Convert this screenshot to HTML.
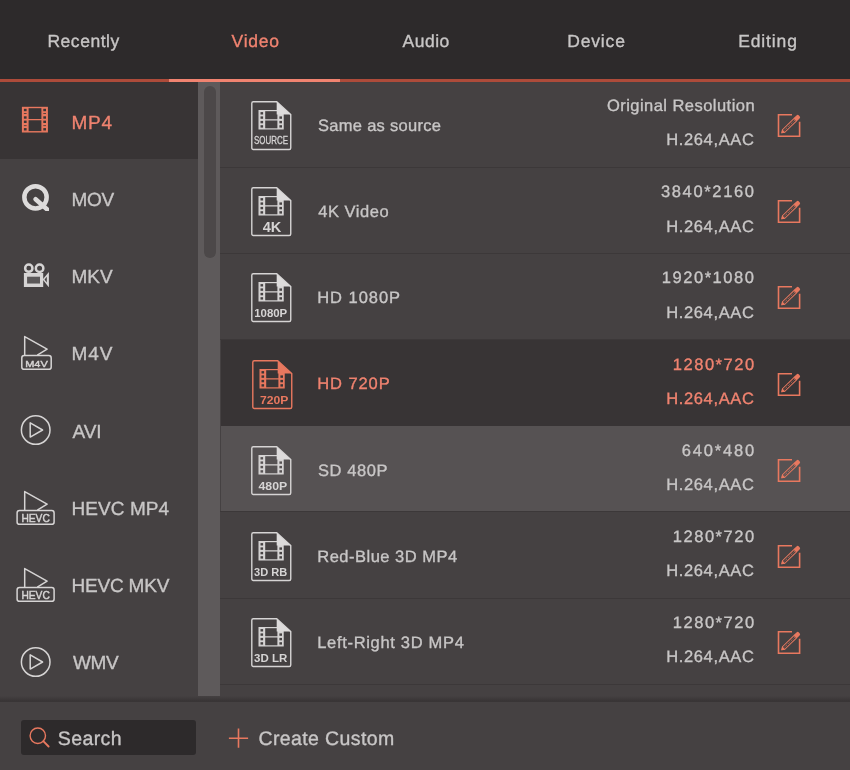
<!DOCTYPE html>
<html lang="en"><head><meta charset="utf-8"><title>Format</title>
<style>
*{margin:0;padding:0;box-sizing:border-box}
html,body{width:850px;height:770px;overflow:hidden;background:#454142}
body{position:relative;font-family:"Liberation Sans",sans-serif;color:#c8c6c6;-webkit-font-smoothing:antialiased}
.abs{position:absolute}
.tx{position:absolute;white-space:nowrap;color:#c8c6c6;-webkit-text-stroke:0.35px currentColor;text-rendering:geometricPrecision}
#L{position:absolute;left:0;top:0;width:850px;height:770px;will-change:transform}
.tx.on{color:#f08370}
#hdr{position:absolute;left:0;top:0;width:850px;height:79px;background:#2d2a2b}
#line{position:absolute;left:0;top:78.7px;width:850px;height:3.3px;background:#ad4b3a}
#lineact{position:absolute;left:169px;top:78.7px;width:171px;height:3.3px;background:#f08370}
#side{position:absolute;left:0;top:82px;width:198px;height:615px;background:#454142;overflow:hidden}
#sel{position:absolute;left:0;top:82px;width:198px;height:77px;background:#383435}
#track{position:absolute;left:197.5px;top:82px;width:22.5px;height:614px;background:#5e5a5b}
#thumb{position:absolute;left:203.5px;top:86px;width:12px;height:172px;border-radius:6px;background:#4c4849}
.sep{position:absolute;left:220px;width:630px;height:1px;background:#3c3839}
.rbg{position:absolute;left:221px;width:629px}
#foot{position:absolute;left:0;top:696px;width:850px;height:74px;background:#454142}
#footsh{position:absolute;left:0;top:695.5px;width:850px;height:6.3px;background:linear-gradient(to bottom,#454142 0%,#3f3b3c 40%,#383435 85%,#3a3637 100%)}
#search{position:absolute;left:21px;top:720px;width:175px;height:35px;border-radius:3px;background:#2d2a2b}
svg{display:block;overflow:visible}
</style></head><body>

<div id="L">
<div id="hdr"></div><div id="line"></div><div id="lineact"></div>
<div class="tx " style="left:47.45px;top:30px;font-size:17.5px;line-height:23px;height:23px;letter-spacing:0.529px">Recently</div>
<div class="tx on" style="left:231.55px;top:30px;font-size:17.5px;line-height:23px;height:23px;letter-spacing:0.737px">Video</div>
<div class="tx " style="left:402.45px;top:30px;font-size:17.5px;line-height:23px;height:23px;letter-spacing:0.525px">Audio</div>
<div class="tx " style="left:567.25px;top:30px;font-size:17.5px;line-height:23px;height:23px;letter-spacing:0.83px">Device</div>
<div class="tx " style="left:738.15px;top:30px;font-size:17.5px;line-height:23px;height:23px;letter-spacing:0.875px">Editing</div>
<div id="side"></div><div id="sel"></div>
<div class="tx on" style="left:71.55px;top:111px;font-size:19px;line-height:25px;height:25px;letter-spacing:0.7px">MP4</div>
<div class="tx " style="left:71.55px;top:188px;font-size:19px;line-height:25px;height:25px;letter-spacing:-0.325px">MOV</div>
<div class="tx " style="left:71.55px;top:265px;font-size:19px;line-height:25px;height:25px;letter-spacing:-0.05px">MKV</div>
<div class="tx " style="left:71.55px;top:342px;font-size:19px;line-height:25px;height:25px;letter-spacing:0.95px">M4V</div>
<div class="tx " style="left:72.55px;top:420px;font-size:19px;line-height:25px;height:25px;letter-spacing:-0.15px">AVI</div>
<div class="tx " style="left:71.55px;top:497px;font-size:19px;line-height:25px;height:25px;letter-spacing:0.057px">HEVC MP4</div>
<div class="tx " style="left:71.55px;top:574px;font-size:19px;line-height:25px;height:25px;letter-spacing:-0.207px">HEVC MKV</div>
<div class="tx " style="left:72.95px;top:651px;font-size:19px;line-height:25px;height:25px;letter-spacing:-0.375px">WMV</div>
<svg class="abs" style="left:20px;top:105px" width="30" height="30" viewBox="0 0 30 30"><g fill="none" stroke="#e8785f" stroke-width="1.4"><rect x="2.6" y="2.5" width="24.6" height="24.3"/>
<path d="M7.9 2.5V26.8M22.1 2.5V26.8M7.9 14.6H22.1"/></g>
<g fill="#e8785f"><rect x="2.6" y="2.5" width="5.3" height="24.3"/><rect x="22.1" y="2.5" width="5.1" height="24.3"/></g>
<g fill="#383435"><rect x="3.9" y="3.8" width="2.7" height="2.4"/><rect x="3.9" y="8.2" width="2.7" height="0.8"/><rect x="3.9" y="11.3" width="2.7" height="2.4"/><rect x="3.9" y="15.6" width="2.7" height="2.4"/><rect x="3.9" y="20.3" width="2.7" height="0.8"/><rect x="3.9" y="23.1" width="2.7" height="2.4"/><rect x="23.3" y="3.8" width="2.7" height="2.4"/><rect x="23.3" y="8.2" width="2.7" height="0.8"/><rect x="23.3" y="11.3" width="2.7" height="2.4"/><rect x="23.3" y="15.6" width="2.7" height="2.4"/><rect x="23.3" y="20.3" width="2.7" height="0.8"/><rect x="23.3" y="23.1" width="2.7" height="2.4"/></g></svg>
<svg class="abs" style="left:20px;top:182px" width="32" height="32" viewBox="0 0 32 32"><defs><clipPath id="qc"><rect x="0" y="0" width="28.9" height="28.9"/></clipPath></defs>
<circle cx="15.5" cy="15.3" r="11.15" fill="none" stroke="#dddbdb" stroke-width="4.5"/>
<g clip-path="url(#qc)"><path d="M15.6 17.2L32 31.8" stroke="#dddbdb" stroke-width="4.5" stroke-linecap="round"/></g></svg>
<svg class="abs" style="left:20px;top:260px" width="32" height="30" viewBox="0 0 32 30"><g fill="none" stroke="#d6d4d4">
<circle cx="8.8" cy="8.2" r="3.65" stroke-width="2.5"/><circle cx="19.6" cy="8.2" r="3.75" stroke-width="2.5"/>
</g><path d="M3.9 12.9H23.2V27.1H3.9Z M7.1 16.8V23.6H20V16.8Z" fill="#d6d4d4" fill-rule="evenodd"/>
<path d="M22.6 19.6L28.9 11.9V27.1H28.6Z M24.5 19.6L26.8 22.6V16.8Z" fill="#d6d4d4" fill-rule="evenodd"/>
<rect x="7.1" y="16.8" width="12.9" height="6.8" fill="#d6d4d4" opacity="0.16"/></svg>
<svg class="abs" style="left:14px;top:333px" width="44" height="42" viewBox="0 0 44 42"><path d="M10.7 22.2V3.6L33.1 16.2L23.3 22.2" fill="none" stroke="#d6d4d4" stroke-width="1.5" stroke-linejoin="round"/>
<rect x="7.8" y="22.6" width="29.400000000000002" height="13.7" rx="2.4" fill="none" stroke="#d6d4d4" stroke-width="1.5"/>
<text x="22.5" y="33.7" text-anchor="middle" textLength="22.6" lengthAdjust="spacingAndGlyphs" font-family="'Liberation Sans', sans-serif" font-size="9.8" fill="#d6d4d4" stroke="#d6d4d4" stroke-width="0.45">M4V</text></svg>
<svg class="abs" style="left:14px;top:487.5px" width="44" height="42" viewBox="0 0 44 42"><path d="M10.7 22.2V3.6L33.1 16.2L23.3 22.2" fill="none" stroke="#d6d4d4" stroke-width="1.5" stroke-linejoin="round"/>
<rect x="3.1" y="22.6" width="37.0" height="13.7" rx="2.4" fill="none" stroke="#d6d4d4" stroke-width="1.5"/>
<text x="21.6" y="34.2" text-anchor="middle" textLength="28.4" lengthAdjust="spacingAndGlyphs" font-family="'Liberation Sans', sans-serif" font-size="10.6" fill="#d6d4d4" stroke="#d6d4d4" stroke-width="0.45">HEVC</text></svg>
<svg class="abs" style="left:14px;top:564.77px" width="44" height="42" viewBox="0 0 44 42"><path d="M10.7 22.2V3.6L33.1 16.2L23.3 22.2" fill="none" stroke="#d6d4d4" stroke-width="1.5" stroke-linejoin="round"/>
<rect x="3.1" y="22.6" width="37.0" height="13.7" rx="2.4" fill="none" stroke="#d6d4d4" stroke-width="1.5"/>
<text x="21.6" y="34.2" text-anchor="middle" textLength="28.4" lengthAdjust="spacingAndGlyphs" font-family="'Liberation Sans', sans-serif" font-size="10.6" fill="#d6d4d4" stroke="#d6d4d4" stroke-width="0.45">HEVC</text></svg>
<svg class="abs" style="left:20px;top:413.6px" width="32" height="32" viewBox="0 0 32 32"><circle cx="15.7" cy="16" r="14.3" fill="none" stroke="#d6d4d4" stroke-width="1.5"/>
<path d="M10.2 8.9V23.1L22.6 16Z" fill="none" stroke="#d6d4d4" stroke-width="1.5" stroke-linejoin="round"/></svg>
<svg class="abs" style="left:20px;top:645.8px" width="32" height="32" viewBox="0 0 32 32"><circle cx="15.7" cy="16" r="14.3" fill="none" stroke="#d6d4d4" stroke-width="1.5"/>
<path d="M10.2 8.9V23.1L22.6 16Z" fill="none" stroke="#d6d4d4" stroke-width="1.5" stroke-linejoin="round"/></svg>
<div id="track"></div><div id="thumb"></div>
<div class="sep" style="top:166.9px"></div>
<div class="sep" style="top:252.9px"></div>
<div class="sep" style="top:339px"></div>
<div class="sep" style="top:511.3px"></div>
<div class="sep" style="top:597.6px"></div>
<div class="sep" style="top:683.9px"></div>
<div class="rbg" style="top:339.5px;height:86.6px;background:#383435"></div>
<div class="rbg" style="top:426.1px;height:85.1px;background:#565253"></div>
<svg class="abs" style="left:250px;top:100.0px" width="44" height="52" viewBox="0 0 44 52">
<path d="M3.3 1.75H26.7L40.75 14.6V48a1.5 1.5 0 0 1-1.5 1.5H3.3a1.5 1.5 0 0 1-1.5-1.5V3.25a1.5 1.5 0 0 1 1.5-1.5Z" fill="none" stroke="#d6d4d4" stroke-width="1.4"/>
<g fill="none" stroke="#d6d4d4" stroke-width="1.2">
<rect x="9.1" y="10.6" width="24" height="18.3"/>
<path d="M14.6 10.6V28.9M28 10.6V28.9M14.6 19.9H28"/>
</g>
<rect x="9.1" y="10.6" width="5.5" height="18.3" fill="#d6d4d4"/>
<rect x="28" y="10.6" width="5.1" height="18.3" fill="#d6d4d4"/>
<g fill="#454142">
<rect x="10.5" y="12.1" width="2.6" height="2.4"/><rect x="10.5" y="16.4" width="2.6" height="2.4"/><rect x="10.5" y="20.9" width="2.6" height="2.4"/><rect x="10.5" y="25.2" width="2.6" height="2.4"/>
<rect x="29.4" y="16.4" width="2.6" height="2.4"/><rect x="29.4" y="20.9" width="2.6" height="2.4"/><rect x="29.4" y="25.2" width="2.6" height="2.4"/>
</g>
<path d="M26.7 1.9V14.6H40.7Z" fill="#dddbdb"/>
<text x="21.05" y="44.3" text-anchor="middle" textLength="34" lengthAdjust="spacingAndGlyphs" font-family="'Liberation Sans', sans-serif" font-weight="normal" font-size="10.2" fill="#d6d4d4" stroke="#d6d4d4" stroke-width="0.3">SOURCE</text>
</svg><svg class="abs" style="left:776px;top:112.0px" width="26" height="26" viewBox="0 0 26 26">
<path d="M16 2.8H2.5V24.2H23.6V9.8" fill="none" stroke="#e8785f" stroke-width="1.6"/>
<g transform="translate(5.5 21.1) rotate(-44.3)">
<path d="M0.4 0L3-1.75H19.4V1.75H3Z" fill="none" stroke="#e8785f" stroke-width="1" stroke-linejoin="round"/>
<path d="M19.2-2.2h3.9a1.7 1.7 0 0 1 1.7 1.7v1a1.7 1.7 0 0 1-1.7 1.7h-3.9Z" fill="#e8785f"/>
<path d="M-0.2 0L3.2-2.2V2.2Z" fill="#e8785f"/>
<path d="M4.4 0H19" stroke="#e8785f" stroke-width="0.9" stroke-dasharray="1.1 1.1" opacity="0.9"/>
</g>
</svg>
<div class="tx " style="left:318.0px;top:116px;font-size:16.5px;line-height:21px;height:21px;letter-spacing:0.288px">Same as source</div><div class="tx " style="left:606.9px;top:96px;font-size:16.5px;line-height:21px;height:21px;letter-spacing:0.461px">Original Resolution</div><div class="tx " style="left:666.15px;top:130px;font-size:16.5px;line-height:21px;height:21px;letter-spacing:0.65px">H.264,AAC</div>
<svg class="abs" style="left:250px;top:186.17px" width="44" height="52" viewBox="0 0 44 52">
<path d="M3.3 1.75H26.7L40.75 14.6V48a1.5 1.5 0 0 1-1.5 1.5H3.3a1.5 1.5 0 0 1-1.5-1.5V3.25a1.5 1.5 0 0 1 1.5-1.5Z" fill="none" stroke="#d6d4d4" stroke-width="1.4"/>
<g fill="none" stroke="#d6d4d4" stroke-width="1.2">
<rect x="9.1" y="10.6" width="24" height="18.3"/>
<path d="M14.6 10.6V28.9M28 10.6V28.9M14.6 19.9H28"/>
</g>
<rect x="9.1" y="10.6" width="5.5" height="18.3" fill="#d6d4d4"/>
<rect x="28" y="10.6" width="5.1" height="18.3" fill="#d6d4d4"/>
<g fill="#454142">
<rect x="10.5" y="12.1" width="2.6" height="2.4"/><rect x="10.5" y="16.4" width="2.6" height="2.4"/><rect x="10.5" y="20.9" width="2.6" height="2.4"/><rect x="10.5" y="25.2" width="2.6" height="2.4"/>
<rect x="29.4" y="16.4" width="2.6" height="2.4"/><rect x="29.4" y="20.9" width="2.6" height="2.4"/><rect x="29.4" y="25.2" width="2.6" height="2.4"/>
</g>
<path d="M26.7 1.9V14.6H40.7Z" fill="#dddbdb"/>
<text x="22.05" y="45.8" text-anchor="middle" textLength="18.7" lengthAdjust="spacingAndGlyphs" font-family="'Liberation Sans', sans-serif" font-weight="bold" font-size="15.4" fill="#d6d4d4">4K</text>
</svg><svg class="abs" style="left:776px;top:198.17px" width="26" height="26" viewBox="0 0 26 26">
<path d="M16 2.8H2.5V24.2H23.6V9.8" fill="none" stroke="#e8785f" stroke-width="1.6"/>
<g transform="translate(5.5 21.1) rotate(-44.3)">
<path d="M0.4 0L3-1.75H19.4V1.75H3Z" fill="none" stroke="#e8785f" stroke-width="1" stroke-linejoin="round"/>
<path d="M19.2-2.2h3.9a1.7 1.7 0 0 1 1.7 1.7v1a1.7 1.7 0 0 1-1.7 1.7h-3.9Z" fill="#e8785f"/>
<path d="M-0.2 0L3.2-2.2V2.2Z" fill="#e8785f"/>
<path d="M4.4 0H19" stroke="#e8785f" stroke-width="0.9" stroke-dasharray="1.1 1.1" opacity="0.9"/>
</g>
</svg>
<div class="tx " style="left:318.25px;top:202px;font-size:16.5px;line-height:21px;height:21px;letter-spacing:0.529px">4K Video</div><div class="tx " style="left:660.9px;top:182px;font-size:16.5px;line-height:21px;height:21px;letter-spacing:1.663px">3840*2160</div><div class="tx " style="left:666.15px;top:217px;font-size:16.5px;line-height:21px;height:21px;letter-spacing:0.65px">H.264,AAC</div>
<svg class="abs" style="left:250px;top:272.34px" width="44" height="52" viewBox="0 0 44 52">
<path d="M3.3 1.75H26.7L40.75 14.6V48a1.5 1.5 0 0 1-1.5 1.5H3.3a1.5 1.5 0 0 1-1.5-1.5V3.25a1.5 1.5 0 0 1 1.5-1.5Z" fill="none" stroke="#d6d4d4" stroke-width="1.4"/>
<g fill="none" stroke="#d6d4d4" stroke-width="1.2">
<rect x="9.1" y="10.6" width="24" height="18.3"/>
<path d="M14.6 10.6V28.9M28 10.6V28.9M14.6 19.9H28"/>
</g>
<rect x="9.1" y="10.6" width="5.5" height="18.3" fill="#d6d4d4"/>
<rect x="28" y="10.6" width="5.1" height="18.3" fill="#d6d4d4"/>
<g fill="#454142">
<rect x="10.5" y="12.1" width="2.6" height="2.4"/><rect x="10.5" y="16.4" width="2.6" height="2.4"/><rect x="10.5" y="20.9" width="2.6" height="2.4"/><rect x="10.5" y="25.2" width="2.6" height="2.4"/>
<rect x="29.4" y="16.4" width="2.6" height="2.4"/><rect x="29.4" y="20.9" width="2.6" height="2.4"/><rect x="29.4" y="25.2" width="2.6" height="2.4"/>
</g>
<path d="M26.7 1.9V14.6H40.7Z" fill="#dddbdb"/>
<text x="20.7" y="44.8" text-anchor="middle" textLength="33" lengthAdjust="spacingAndGlyphs" font-family="'Liberation Sans', sans-serif" font-weight="bold" font-size="11" fill="#d6d4d4">1080P</text>
</svg><svg class="abs" style="left:776px;top:284.34px" width="26" height="26" viewBox="0 0 26 26">
<path d="M16 2.8H2.5V24.2H23.6V9.8" fill="none" stroke="#e8785f" stroke-width="1.6"/>
<g transform="translate(5.5 21.1) rotate(-44.3)">
<path d="M0.4 0L3-1.75H19.4V1.75H3Z" fill="none" stroke="#e8785f" stroke-width="1" stroke-linejoin="round"/>
<path d="M19.2-2.2h3.9a1.7 1.7 0 0 1 1.7 1.7v1a1.7 1.7 0 0 1-1.7 1.7h-3.9Z" fill="#e8785f"/>
<path d="M-0.2 0L3.2-2.2V2.2Z" fill="#e8785f"/>
<path d="M4.4 0H19" stroke="#e8785f" stroke-width="0.9" stroke-dasharray="1.1 1.1" opacity="0.9"/>
</g>
</svg>
<div class="tx " style="left:317.25px;top:288px;font-size:16.5px;line-height:21px;height:21px;letter-spacing:0.95px">HD 1080P</div><div class="tx " style="left:661.7px;top:268px;font-size:16.5px;line-height:21px;height:21px;letter-spacing:1.562px">1920*1080</div><div class="tx " style="left:666.15px;top:303px;font-size:16.5px;line-height:21px;height:21px;letter-spacing:0.65px">H.264,AAC</div>
<svg class="abs" style="left:251px;top:359.01px" width="44" height="52" viewBox="0 0 44 52">
<path d="M3.3 1.75H26.7L40.75 14.6V48a1.5 1.5 0 0 1-1.5 1.5H3.3a1.5 1.5 0 0 1-1.5-1.5V3.25a1.5 1.5 0 0 1 1.5-1.5Z" fill="none" stroke="#e8785f" stroke-width="1.4"/>
<g fill="none" stroke="#e8785f" stroke-width="1.2">
<rect x="9.1" y="10.6" width="24" height="18.3"/>
<path d="M14.6 10.6V28.9M28 10.6V28.9M14.6 19.9H28"/>
</g>
<rect x="9.1" y="10.6" width="5.5" height="18.3" fill="#e8785f"/>
<rect x="28" y="10.6" width="5.1" height="18.3" fill="#e8785f"/>
<g fill="#383435">
<rect x="10.5" y="12.1" width="2.6" height="2.4"/><rect x="10.5" y="16.4" width="2.6" height="2.4"/><rect x="10.5" y="20.9" width="2.6" height="2.4"/><rect x="10.5" y="25.2" width="2.6" height="2.4"/>
<rect x="29.4" y="16.4" width="2.6" height="2.4"/><rect x="29.4" y="20.9" width="2.6" height="2.4"/><rect x="29.4" y="25.2" width="2.6" height="2.4"/>
</g>
<path d="M26.7 1.9V14.6H40.7Z" fill="#e8785f"/>
<text x="23.2" y="44.5" text-anchor="middle" textLength="28.4" lengthAdjust="spacingAndGlyphs" font-family="'Liberation Sans', sans-serif" font-weight="bold" font-size="11" fill="#e8785f">720P</text>
</svg><svg class="abs" style="left:776px;top:370.51px" width="26" height="26" viewBox="0 0 26 26">
<path d="M16 2.8H2.5V24.2H23.6V9.8" fill="none" stroke="#e8785f" stroke-width="1.6"/>
<g transform="translate(5.5 21.1) rotate(-44.3)">
<path d="M0.4 0L3-1.75H19.4V1.75H3Z" fill="none" stroke="#e8785f" stroke-width="1" stroke-linejoin="round"/>
<path d="M19.2-2.2h3.9a1.7 1.7 0 0 1 1.7 1.7v1a1.7 1.7 0 0 1-1.7 1.7h-3.9Z" fill="#e8785f"/>
<path d="M-0.2 0L3.2-2.2V2.2Z" fill="#e8785f"/>
<path d="M4.4 0H19" stroke="#e8785f" stroke-width="0.9" stroke-dasharray="1.1 1.1" opacity="0.9"/>
</g>
</svg>
<div class="tx on" style="left:317.25px;top:374px;font-size:16.5px;line-height:21px;height:21px;letter-spacing:0.917px">HD 720P</div><div class="tx on" style="left:672.8px;top:355px;font-size:16.5px;line-height:21px;height:21px;letter-spacing:1.521px">1280*720</div><div class="tx on" style="left:666.15px;top:389px;font-size:16.5px;line-height:21px;height:21px;letter-spacing:0.65px">H.264,AAC</div>
<svg class="abs" style="left:250px;top:444.68px" width="44" height="52" viewBox="0 0 44 52">
<path d="M3.3 1.75H26.7L40.75 14.6V48a1.5 1.5 0 0 1-1.5 1.5H3.3a1.5 1.5 0 0 1-1.5-1.5V3.25a1.5 1.5 0 0 1 1.5-1.5Z" fill="none" stroke="#d6d4d4" stroke-width="1.4"/>
<g fill="none" stroke="#d6d4d4" stroke-width="1.2">
<rect x="9.1" y="10.6" width="24" height="18.3"/>
<path d="M14.6 10.6V28.9M28 10.6V28.9M14.6 19.9H28"/>
</g>
<rect x="9.1" y="10.6" width="5.5" height="18.3" fill="#d6d4d4"/>
<rect x="28" y="10.6" width="5.1" height="18.3" fill="#d6d4d4"/>
<g fill="#565253">
<rect x="10.5" y="12.1" width="2.6" height="2.4"/><rect x="10.5" y="16.4" width="2.6" height="2.4"/><rect x="10.5" y="20.9" width="2.6" height="2.4"/><rect x="10.5" y="25.2" width="2.6" height="2.4"/>
<rect x="29.4" y="16.4" width="2.6" height="2.4"/><rect x="29.4" y="20.9" width="2.6" height="2.4"/><rect x="29.4" y="25.2" width="2.6" height="2.4"/>
</g>
<path d="M26.7 1.9V14.6H40.7Z" fill="#dddbdb"/>
<text x="22.85" y="45.1" text-anchor="middle" textLength="28.7" lengthAdjust="spacingAndGlyphs" font-family="'Liberation Sans', sans-serif" font-weight="bold" font-size="11" fill="#d6d4d4">480P</text>
</svg><svg class="abs" style="left:776px;top:456.68px" width="26" height="26" viewBox="0 0 26 26">
<path d="M16 2.8H2.5V24.2H23.6V9.8" fill="none" stroke="#e8785f" stroke-width="1.6"/>
<g transform="translate(5.5 21.1) rotate(-44.3)">
<path d="M0.4 0L3-1.75H19.4V1.75H3Z" fill="none" stroke="#e8785f" stroke-width="1" stroke-linejoin="round"/>
<path d="M19.2-2.2h3.9a1.7 1.7 0 0 1 1.7 1.7v1a1.7 1.7 0 0 1-1.7 1.7h-3.9Z" fill="#e8785f"/>
<path d="M-0.2 0L3.2-2.2V2.2Z" fill="#e8785f"/>
<path d="M4.4 0H19" stroke="#e8785f" stroke-width="0.9" stroke-dasharray="1.1 1.1" opacity="0.9"/>
</g>
</svg>
<div class="tx " style="left:318.0px;top:461px;font-size:16.5px;line-height:21px;height:21px;letter-spacing:0.583px">SD 480P</div><div class="tx " style="left:681.65px;top:441px;font-size:16.5px;line-height:21px;height:21px;letter-spacing:1.842px">640*480</div><div class="tx " style="left:666.15px;top:475px;font-size:16.5px;line-height:21px;height:21px;letter-spacing:0.65px">H.264,AAC</div>
<svg class="abs" style="left:250px;top:530.85px" width="44" height="52" viewBox="0 0 44 52">
<path d="M3.3 1.75H26.7L40.75 14.6V48a1.5 1.5 0 0 1-1.5 1.5H3.3a1.5 1.5 0 0 1-1.5-1.5V3.25a1.5 1.5 0 0 1 1.5-1.5Z" fill="none" stroke="#d6d4d4" stroke-width="1.4"/>
<g fill="none" stroke="#d6d4d4" stroke-width="1.2">
<rect x="9.1" y="10.6" width="24" height="18.3"/>
<path d="M14.6 10.6V28.9M28 10.6V28.9M14.6 19.9H28"/>
</g>
<rect x="9.1" y="10.6" width="5.5" height="18.3" fill="#d6d4d4"/>
<rect x="28" y="10.6" width="5.1" height="18.3" fill="#d6d4d4"/>
<g fill="#454142">
<rect x="10.5" y="12.1" width="2.6" height="2.4"/><rect x="10.5" y="16.4" width="2.6" height="2.4"/><rect x="10.5" y="20.9" width="2.6" height="2.4"/><rect x="10.5" y="25.2" width="2.6" height="2.4"/>
<rect x="29.4" y="16.4" width="2.6" height="2.4"/><rect x="29.4" y="20.9" width="2.6" height="2.4"/><rect x="29.4" y="25.2" width="2.6" height="2.4"/>
</g>
<path d="M26.7 1.9V14.6H40.7Z" fill="#dddbdb"/>
<text x="20.6" y="45.1" text-anchor="middle" textLength="33.2" lengthAdjust="spacingAndGlyphs" font-family="'Liberation Sans', sans-serif" font-weight="bold" font-size="10.6" fill="#d6d4d4">3D RB</text>
</svg><svg class="abs" style="left:776px;top:542.85px" width="26" height="26" viewBox="0 0 26 26">
<path d="M16 2.8H2.5V24.2H23.6V9.8" fill="none" stroke="#e8785f" stroke-width="1.6"/>
<g transform="translate(5.5 21.1) rotate(-44.3)">
<path d="M0.4 0L3-1.75H19.4V1.75H3Z" fill="none" stroke="#e8785f" stroke-width="1" stroke-linejoin="round"/>
<path d="M19.2-2.2h3.9a1.7 1.7 0 0 1 1.7 1.7v1a1.7 1.7 0 0 1-1.7 1.7h-3.9Z" fill="#e8785f"/>
<path d="M-0.2 0L3.2-2.2V2.2Z" fill="#e8785f"/>
<path d="M4.4 0H19" stroke="#e8785f" stroke-width="0.9" stroke-dasharray="1.1 1.1" opacity="0.9"/>
</g>
</svg>
<div class="tx " style="left:317.25px;top:547px;font-size:16.5px;line-height:21px;height:21px;letter-spacing:0.5px">Red-Blue 3D MP4</div><div class="tx " style="left:672.8px;top:527px;font-size:16.5px;line-height:21px;height:21px;letter-spacing:1.521px">1280*720</div><div class="tx " style="left:666.15px;top:561px;font-size:16.5px;line-height:21px;height:21px;letter-spacing:0.65px">H.264,AAC</div>
<svg class="abs" style="left:250px;top:617.02px" width="44" height="52" viewBox="0 0 44 52">
<path d="M3.3 1.75H26.7L40.75 14.6V48a1.5 1.5 0 0 1-1.5 1.5H3.3a1.5 1.5 0 0 1-1.5-1.5V3.25a1.5 1.5 0 0 1 1.5-1.5Z" fill="none" stroke="#d6d4d4" stroke-width="1.4"/>
<g fill="none" stroke="#d6d4d4" stroke-width="1.2">
<rect x="9.1" y="10.6" width="24" height="18.3"/>
<path d="M14.6 10.6V28.9M28 10.6V28.9M14.6 19.9H28"/>
</g>
<rect x="9.1" y="10.6" width="5.5" height="18.3" fill="#d6d4d4"/>
<rect x="28" y="10.6" width="5.1" height="18.3" fill="#d6d4d4"/>
<g fill="#454142">
<rect x="10.5" y="12.1" width="2.6" height="2.4"/><rect x="10.5" y="16.4" width="2.6" height="2.4"/><rect x="10.5" y="20.9" width="2.6" height="2.4"/><rect x="10.5" y="25.2" width="2.6" height="2.4"/>
<rect x="29.4" y="16.4" width="2.6" height="2.4"/><rect x="29.4" y="20.9" width="2.6" height="2.4"/><rect x="29.4" y="25.2" width="2.6" height="2.4"/>
</g>
<path d="M26.7 1.9V14.6H40.7Z" fill="#dddbdb"/>
<text x="20.6" y="45.1" text-anchor="middle" textLength="33.2" lengthAdjust="spacingAndGlyphs" font-family="'Liberation Sans', sans-serif" font-weight="bold" font-size="10.6" fill="#d6d4d4">3D LR</text>
</svg><svg class="abs" style="left:776px;top:629.02px" width="26" height="26" viewBox="0 0 26 26">
<path d="M16 2.8H2.5V24.2H23.6V9.8" fill="none" stroke="#e8785f" stroke-width="1.6"/>
<g transform="translate(5.5 21.1) rotate(-44.3)">
<path d="M0.4 0L3-1.75H19.4V1.75H3Z" fill="none" stroke="#e8785f" stroke-width="1" stroke-linejoin="round"/>
<path d="M19.2-2.2h3.9a1.7 1.7 0 0 1 1.7 1.7v1a1.7 1.7 0 0 1-1.7 1.7h-3.9Z" fill="#e8785f"/>
<path d="M-0.2 0L3.2-2.2V2.2Z" fill="#e8785f"/>
<path d="M4.4 0H19" stroke="#e8785f" stroke-width="0.9" stroke-dasharray="1.1 1.1" opacity="0.9"/>
</g>
</svg>
<div class="tx " style="left:317.25px;top:633px;font-size:16.5px;line-height:21px;height:21px;letter-spacing:0.678px">Left-Right 3D MP4</div><div class="tx " style="left:672.8px;top:613px;font-size:16.5px;line-height:21px;height:21px;letter-spacing:1.521px">1280*720</div><div class="tx " style="left:666.15px;top:647px;font-size:16.5px;line-height:21px;height:21px;letter-spacing:0.65px">H.264,AAC</div>
<div id="foot"></div><div id="footsh"></div><div id="search"></div>
<svg class="abs" style="left:26px;top:724px" width="28" height="28" viewBox="0 0 28 28"><circle cx="11.8" cy="11.75" r="7.7" fill="none" stroke="#e8785f" stroke-width="1.4"/><path d="M17.3 17.2L22.6 22.5" stroke="#e8785f" stroke-width="1.9" stroke-linecap="round"/></svg>
<div class="tx " style="left:57.75px;top:727px;font-size:19.5px;line-height:25px;height:25px;letter-spacing:0.4px">Search</div>
<svg class="abs" style="left:226px;top:726px" width="26" height="26" viewBox="0 0 26 26"><path d="M12.5 2.6V21.8M2.9 12.2H22.1" stroke="#e8785f" stroke-width="1.6"/></svg>
<div class="tx " style="left:258.55px;top:727px;font-size:19.5px;line-height:25px;height:25px;letter-spacing:0.371px">Create Custom</div>
</div></body></html>
